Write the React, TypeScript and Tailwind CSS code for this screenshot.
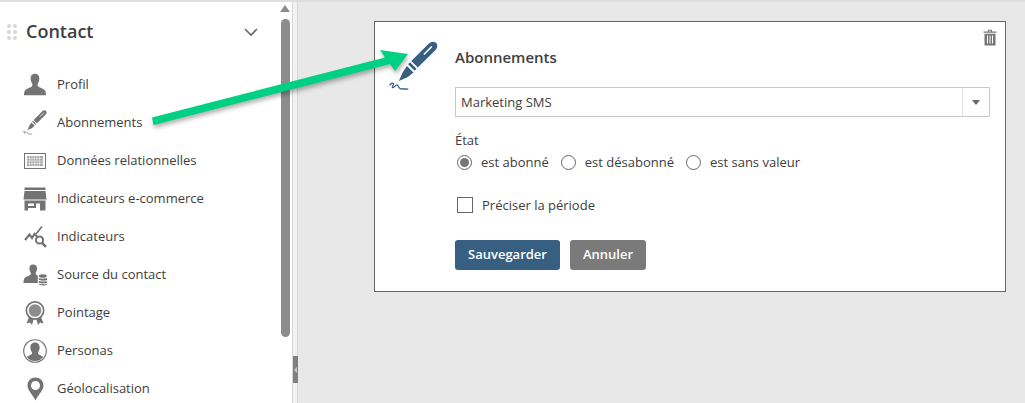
import React from 'react';

const GREY = '#737373';

function PenIcon({ color, size }: { color: string; size: number }) {
    return (
        <svg width={size} height={size} viewBox="0 0 48 48" fill="none">
            {/* barrel */}
            <path d="M37.500 2.500c2.200-2 5-2.600 6.800-.8 1.900 1.800 1.400 4.800-.6 6.800L27.500 24.500 21.500 18.500z" fill={color} />
            <path d="M20.300 19.700l6 6-1.700 1.700-6-6z" fill={color} />
            {/* nib */}
            <path d="M17.500 23l6 6-5.500 4.500L10 37l3.500-8z" fill={color} />
            <path d="M33.500 12l6.500-6.500" stroke="#fff" strokeWidth="1.500" strokeLinecap="round" />
            <path d="M1.500 41c.8-1.800 2.800-2.800 3.600-1.600.8 1.400-2 2.800-1 3.600 1.100.9 3.300-3.300 4.600-2.400 1.200.8 .8 3.300 3 3.500 2 .2 4.500.2 7 .4" stroke={color} strokeWidth="1.200" />
        </svg>
    );
}

function ProfileIcon() {
    return (
        <svg width="24" height="24" viewBox="0 0 24 24" fill={GREY}>
            <path d="M12 .8C8.800.8 7.500 3.100 7.700 6c.1 1.800.7 3.300 1.400 4.500.6 1 .4 2.600-.6 3.200-1.800 1.200-5.700 2-6.800 4.400-.5 1.100-.7 2.900-.7 4.100h22c0-1.200-.2-3-.7-4.100-1.100-2.400-5-3.200-6.800-4.400-1-.6-1.200-2.200-.6-3.200.7-1.200 1.300-2.700 1.400-4.500.2-2.900-1.100-5.200-4.300-5.200z" />
        </svg>
    );
}

function CalendarIcon() {
    return (
        <svg width="22" height="16" viewBox="0 0 22 16" fill="none">
            <rect x="0.500" y="0.500" width="21" height="15" stroke={GREY} fill="#fff" />
            <rect x="3" y="3" width="16" height="10" fill="#a8a8a8" />
            <path d="M5.500 3v10M8 3v10M10.500 3v10M13 3v10M15.500 3v10M3 5.500h16M3 8h16M3 10.500h16" stroke="#e4e4e4" strokeWidth="0.800" />
        </svg>
    );
}

function ShopIcon() {
    return (
        <svg width="24" height="24" viewBox="0 0 24 24" fill={GREY}>
            <rect x="1.500" y="0.500" width="21" height="2.500" />
            <path d="M1.500 4h21l1 8.500H.5z" />
            <path d="M1.500 13.500h21V23.500H17V16.500h-4v4.500H5v2.500H1.500z" />
            <rect x="5" y="16.500" width="6" height="2.500" fill="#fff" />
        </svg>
    );
}

function ChartSearchIcon() {
    return (
        <svg width="23" height="22" viewBox="0 0 23 22" fill="none" stroke={GREY}>
            <path d="M1 14l4.500-5.500 2.500 3.500 2.500-4 2.500 2.500" strokeWidth="2.200" />
            <path d="M12 8l6-7.500" strokeWidth="1.700" />
            <circle cx="15.500" cy="14" r="3.600" strokeWidth="2" />
            <path d="M18 16.800l4 4" strokeWidth="2.600" />
        </svg>
    );
}

function SourceIcon() {
    return (
        <svg width="24" height="22" viewBox="0 0 24 22" fill={GREY}>
            <path d="M10 0.500c-2.500 0-3.800 1.800-3.600 4.200.1 1.500.6 2.800 1.200 3.800.5.800.3 2-.4 2.500-1.500 1-5 1.600-5.900 3.500-.6 1.200-.8 3-.8 4.500h14.300V11.500c-.6-.2-1-.4-1.500-.7-.7-.5-.9-1.500-.4-2.300.6-1 1.100-2.300 1.200-3.800.2-2.400-1.100-4.200-4.100-4.200z" />
            <ellipse cx="19.800" cy="12" rx="4" ry="1.800" />
            <path d="M15.800 13.900c.6 1.100 7.800 1.100 8.400 0v1.900c-.6 1.100-7.800 1.100-8.400 0zM15.800 16.700c.6 1.100 7.800 1.100 8.400 0v1.900c-.6 1.100-7.800 1.100-8.400 0zM15.800 19.500c.6 1.100 7.800 1.100 8.400 0v.6c-.6 1.700-7.800 1.700-8.400 0z" />
        </svg>
    );
}

function RibbonIcon() {
    return (
        <svg width="22" height="24" viewBox="0 0 22 24" fill={GREY}>
            <path d="M5 16l-2.500 6.500 3.500-1 2 2.500 1.800-6.500zM17 16l2.500 6.500-3.500-1-2 2.500-1.800-6.500z" />
            <circle cx="11" cy="9.500" r="9.500" />
            <circle cx="11" cy="9.500" r="7.800" fill="#fff" />
            <circle cx="11" cy="9.500" r="6.300" fill="#8c8c8c" />
        </svg>
    );
}

function PersonaIcon() {
    return (
        <svg width="24" height="24" viewBox="0 0 24 24" fill={GREY}>
            <circle cx="12" cy="12" r="11.300" fill="none" stroke={GREY} strokeWidth="1.100" />
            <path d="M12 3.500c-3.300 0-4.800 2.300-4.600 5.200.1 1.700.6 3 1.300 4.100.6 1 .4 2-.5 2.600-1.100.7-2.900 1.300-4.300 2.500C5.900 20.800 8.800 22 12 22s6.100-1.200 8.100-4.100c-1.400-1.200-3.200-1.800-4.300-2.500-.9-.6-1.100-1.600-.5-2.600.7-1.100 1.200-2.400 1.300-4.100.2-2.900-1.300-5.200-4.600-5.200z" />
        </svg>
    );
}

function PinIcon() {
    return (
        <svg width="17" height="24" viewBox="0 0 17 24" fill={GREY}>
            <path fillRule="evenodd" d="M8.500 0.500C4 .5.500 4 .5 8.300c0 4.700 4.500 8.600 8 15.200 3.500-6.600 8-10.500 8-15.200C16.500 4 13 .5 8.500.5zm0 3.500a4.500 4.500 0 110 9 4.500 4.500 0 010-9z" />
        </svg>
    );
}

const items: { label: string; icon: React.ReactNode }[] = [
    { label: 'Profil', icon: <ProfileIcon /> },
    { label: 'Abonnements', icon: <PenIcon color={GREY} size={26} /> },
    { label: 'Données relationnelles', icon: <CalendarIcon /> },
    { label: 'Indicateurs e-commerce', icon: <ShopIcon /> },
    { label: 'Indicateurs', icon: <ChartSearchIcon /> },
    { label: 'Source du contact', icon: <SourceIcon /> },
    { label: 'Pointage', icon: <RibbonIcon /> },
    { label: 'Personas', icon: <PersonaIcon /> },
    { label: 'Géolocalisation', icon: <PinIcon /> },
];

function Radio({ label, checked }: { label: string; checked?: boolean }) {
    return (
        <label className="flex items-center gap-[9px]">
            <span className="flex h-[15px] w-[15px] items-center justify-center rounded-full border border-[#666] bg-white">
                {checked && <span className="h-[9px] w-[9px] rounded-full bg-[#777]" />}
            </span>
            <span className="pt-[2px]">{label}</span>
        </label>
    );
}

export default function App() {
    return (
        <div className="relative flex h-[403px] w-[1025px] overflow-hidden border-t-2 border-[#dedede] bg-[#e8e8e8] text-[13px] text-[#3d3d3d] [font-family:'Open_Sans',sans-serif]">
            {/* Sidebar */}
            <aside className="flex h-full w-[292px] shrink-0 bg-white">
                <div className="w-[278px] shrink-0">
                    <div className="flex h-[64px] items-start pt-[16px] pl-[7px] pr-[20px]">
                        <span className="mt-[6px] grid grid-cols-2 gap-[2px]">
                            {[0, 1, 2, 3, 4, 5].map((i) => (
                                <span key={i} className="h-[4px] w-[4px] rounded-full bg-[#d9d9d9]" />
                            ))}
                        </span>
                        <h1 className="ml-[9px] text-[18px] leading-[26px] font-semibold text-[#404040]">Contact</h1>
                        <svg className="mt-[10px] ml-auto" width="14" height="9" viewBox="0 0 14 9" fill="none" stroke="#666" strokeWidth="1.600">
                            <path d="M1 1l6 6 6-6" />
                        </svg>
                    </div>
                    <ul>
                        {items.map((item) => (
                            <li key={item.label} className="flex h-[38px] items-center">
                                <span className="flex w-[57px] shrink-0 justify-center pl-[13px]">{item.icon}</span>
                                <span>{item.label}</span>
                            </li>
                        ))}
                    </ul>
                </div>
                <div className="flex w-[14px] flex-col items-center px-[2px] pt-[3px]">
                    <span className="h-0 w-0 border-x-[5px] border-b-[7px] border-x-transparent border-b-[#8c8c8c]" />
                    <span className="mt-[7px] h-[318px] w-[9px] rounded-full bg-[#8c8c8c]" />
                </div>
            </aside>

            {/* Splitter */}
            <div className="flex h-full w-[6px] shrink-0 items-start border-x border-[#d6d6d6] bg-[#f2f2f5] pt-[354px]">
                <span className="flex h-[27px] w-[5px] shrink-0 items-center justify-center bg-[#808080]">
                    <span className="h-0 w-0 border-y-[3px] border-r-[3px] border-y-transparent border-r-[#c8c8c8]" />
                </span>
            </div>

            {/* Main */}
            <main className="min-w-0 flex-1 pt-[19px] pr-[19px] pl-[76px]">
                <div className="relative flex h-[271px] border border-[#666] bg-white">
                    <div className="w-[80px] shrink-0 pt-[19px] pl-[13px]">
                        <PenIcon color="#375f82" size={52} />
                    </div>
                    <div className="flex-1 pr-[15px]">
                        <h2 className="mt-[25px] text-[15px] leading-[20px] font-semibold text-[#404040]">Abonnements</h2>
                        <div className="mt-[20px] flex h-[30px] items-center border border-[#c8c8c8]">
                            <span className="flex-1 pt-[2px] pl-[5px]">Marketing SMS</span>
                            <span className="flex h-full w-[27px] items-center justify-center border-l border-[#e2e2e2]">
                                <span className="h-0 w-0 border-x-[4px] border-t-[5px] border-x-transparent border-t-[#666]" />
                            </span>
                        </div>
                        <div className="mt-[14px] leading-[18px]">État</div>
                        <div className="mt-[4px] flex h-[18px] items-center gap-[12px] pl-[2px]">
                            <Radio label="est abonné" checked />
                            <Radio label="est désabonné" />
                            <Radio label="est sans valeur" />
                        </div>
                        <label className="mt-[25px] flex h-[18px] items-center gap-[9px] pl-[2px]">
                            <span className="h-[16px] w-[16px] border border-[#666] bg-white" />
                            <span className="pt-[2px]">Préciser la période</span>
                        </label>
                        <div className="mt-[26px] flex gap-[10px]">
                            <button className="h-[30px] w-[105px] rounded-[3px] bg-[#375f82] font-semibold text-white">Sauvegarder</button>
                            <button className="h-[30px] w-[76px] rounded-[3px] bg-[#7a7a7a] font-semibold text-white">Annuler</button>
                        </div>
                    </div>
                    <svg className="absolute top-[7px] right-[8px]" width="14" height="17" viewBox="0 0 14 17" fill="#777">
                        <path d="M0.500 2.500h4.500V.8h4v1.700h4.500v1.300H.5zM6 1.700v.8h2v-.8z" />
                        <path fillRule="evenodd" d="M1.500 4.800h11V16.500h-11zM4 6.500v8h1v-8zM6.500 6.500v8h1v-8zM9 6.500v8h1v-8z" />
                    </svg>
                </div>
            </main>

            {/* Annotation arrow, over the page */}
            <svg className="pointer-events-none absolute top-[-2px] left-0" width="1025" height="403" viewBox="0 0 1025 403">
                <g style={{ filter: 'drop-shadow(1px 3px 2px rgba(0,0,0,.3))' }}>
                    <path d="M152 117.500L385 57.500l-5-7.500 28 4-13 17-5-7L153.500 125z" fill="#00d084" />
                </g>
            </svg>
        </div>
    );
}
